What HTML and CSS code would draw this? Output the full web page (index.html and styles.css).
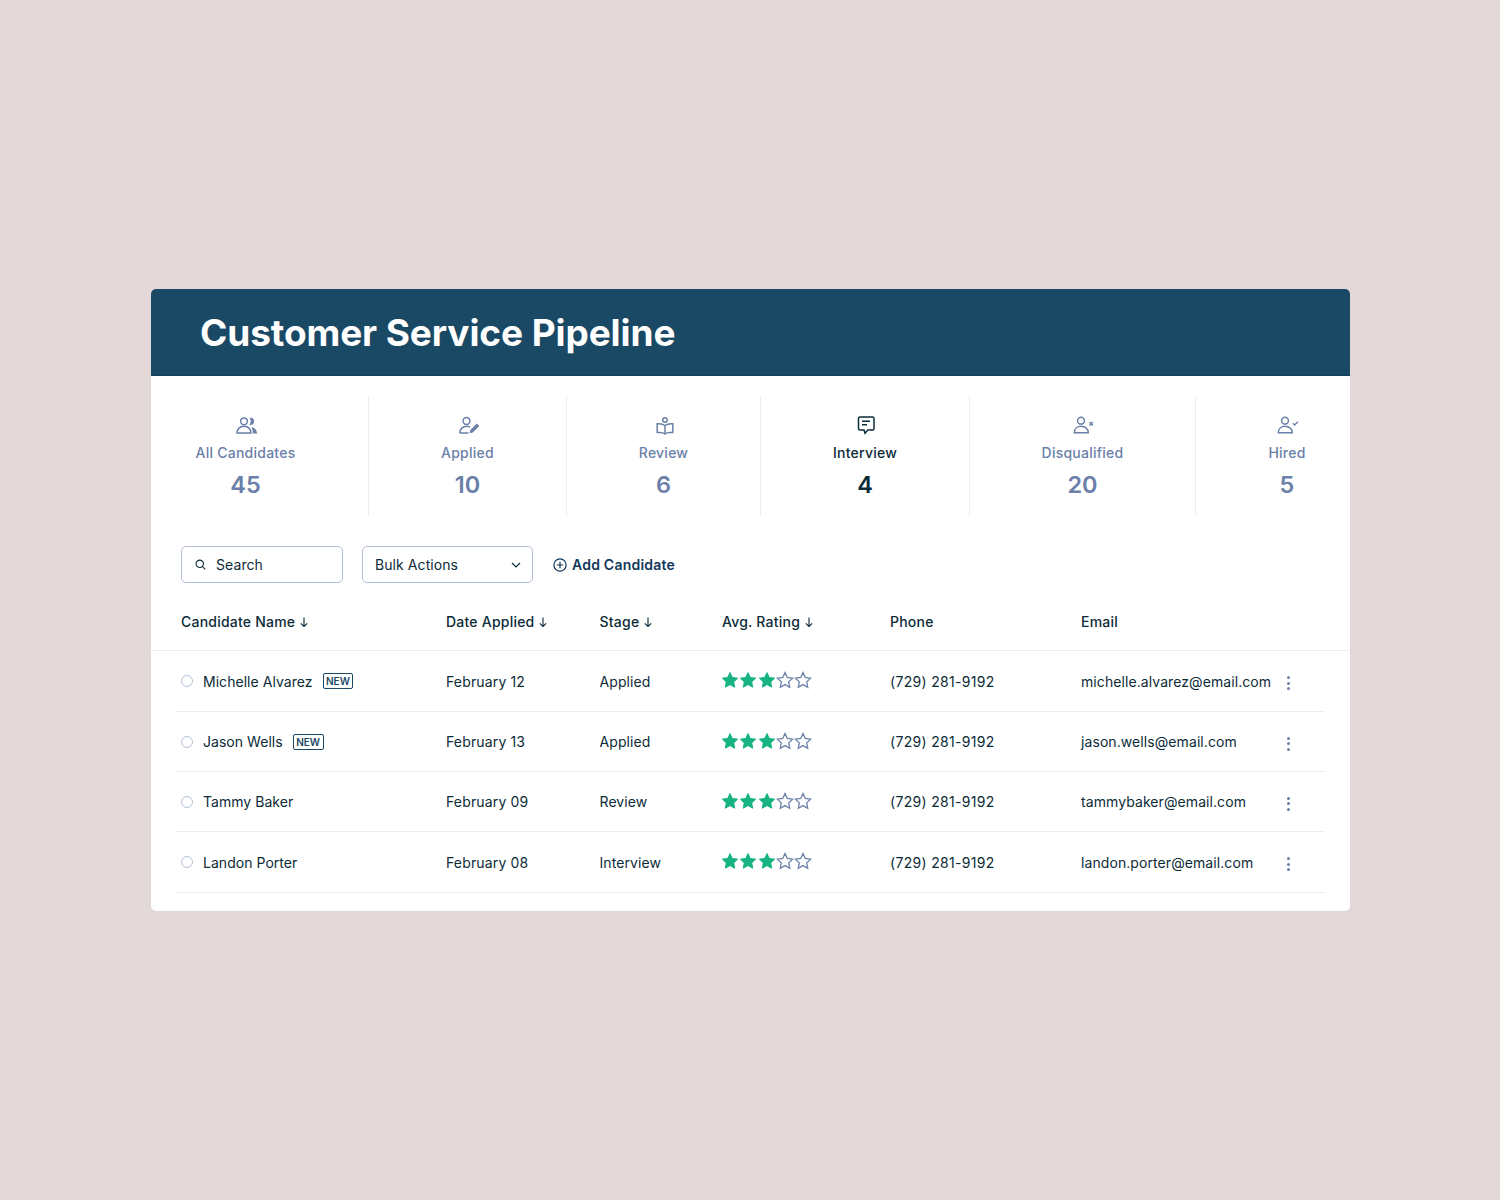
FILE: index.html
```html
<!DOCTYPE html>
<html lang="en">
<head>
<meta charset="utf-8">
<title>Customer Service Pipeline</title>
<link rel="stylesheet" href="styles.css">
</head>
<body>
<svg class="defs" width="0" height="0" aria-hidden="true">
  <defs>
    <path id="star" d="M9 1.6l2.300 4.900 5.300.7-3.900 3.700 1 5.300L9 13.600l-4.700 2.600 1-5.300-3.900-3.700 5.300-.7z"/>
  </defs>
</svg>
<main class="card">
  <header class="banner"><h1>Customer Service Pipeline</h1></header>

  <section class="stats">
    <div class="stat stat-first">
      <svg class="stat-icon" viewBox="0 0 22 22"><circle cx="8" cy="8.300" r="3.400"/><path d="M1 20c0-4 3-6.800 7-6.800s7 2.800 7 6.800z"/><path class="solid" d="M13.500 4.700h1a3.600 3.600 0 0 1 0 7.200h-1c.8-1 1.200-2.300 1.200-3.600s-.4-2.600-1.200-3.600zM15.500 14c3 .6 5.500 2.800 5.500 6.400h-4.200c0-2.400-.3-4.600-1.300-6.400z"/></svg>
      <span class="stat-label">All Candidates</span>
      <span class="stat-num">45</span>
    </div>
    <div class="stat stat-2">
      <svg class="stat-icon" viewBox="0 0 22 22"><circle cx="8.500" cy="8" r="3.400"/><path d="M1.800 20c0-4 3-6.800 6.700-6.800 1.300 0 2.400.3 3.400.8M1.800 20h8.700"/><path class="solid" d="M12.300 17l6.500-6.500 2.500 2.500-6.500 6.500-3.200.7z"/></svg>
      <span class="stat-label">Applied</span>
      <span class="stat-num">10</span>
    </div>
    <div class="stat stat-3">
      <svg class="stat-icon" viewBox="0 0 22 22"><circle cx="11" cy="7" r="2.200"/><path d="M11 12.500c-1.700-1.200-3.700-1.700-6-1.700H3.200v8.700H6c2 0 3.600.5 5 1.500 1.400-1 3-1.500 5-1.500h2.800v-8.700H17c-2.300 0-4.300.5-6 1.700zM11 12.500V20"/></svg>
      <span class="stat-label">Review</span>
      <span class="stat-num">6</span>
    </div>
    <div class="stat stat-4 stat-active">
      <svg class="stat-icon" viewBox="0 0 22 22"><path d="M5 4h12.500A1.500 1.500 0 0 1 19 5.500v10a1.500 1.500 0 0 1-1.500 1.500h-4.700L10 20.300 9 17H5a1.500 1.500 0 0 1-1.500-1.500v-10A1.500 1.500 0 0 1 5 4z"/><path d="M7 8.300h8M7 11.800h5"/></svg>
      <span class="stat-label">Interview</span>
      <span class="stat-num">4</span>
    </div>
    <div class="stat stat-5">
      <svg class="stat-icon" viewBox="0 0 22 22"><circle cx="8" cy="7.700" r="3.400"/><path d="M1.300 19.700c0-4 3-6.500 6.700-6.500s7.300 2.500 7.300 6.500z"/><path class="thin" d="M16.500 9l3.400 3.600M19.900 9l-3.400 3.600"/></svg>
      <span class="stat-label">Disqualified</span>
      <span class="stat-num">20</span>
    </div>
    <div class="stat stat-last">
      <svg class="stat-icon" viewBox="0 0 22 22"><circle cx="8" cy="7.700" r="3.400"/><path d="M1.300 19.700c0-4 3-6.500 6.700-6.500s7.300 2.500 7.300 6.500z"/><path class="thin" d="M15.800 10.300l1.800 1.700 3.400-3.300"/></svg>
      <span class="stat-label">Hired</span>
      <span class="stat-num">5</span>
    </div>
  </section>

  <section class="toolbar">
    <div class="field search">
      <svg class="search-icon" viewBox="0 0 12 12"><circle cx="5.200" cy="5.200" r="4"/><path d="M8.200 8.200l3 3"/></svg>
      <span>Search</span>
    </div>
    <div class="field bulk">
      <span>Bulk Actions</span>
      <svg class="chev" viewBox="0 0 12 12"><path d="M2 4l4 4 4-4"/></svg>
    </div>
    <div class="add">
      <svg class="add-icon" viewBox="0 0 16 16"><circle cx="8" cy="8" r="7"/><path d="M8 4.300v7.400M4.300 8h7.400"/></svg>
      <span>Add Candidate</span>
    </div>
  </section>

  <section class="table">
    <div class="row head">
      <span class="th">Candidate Name <svg class="sort" viewBox="0 0 10 12"><path d="M5 1.500v9M1.800 7.300L5 10.500l3.200-3.200"/></svg></span>
      <span class="th">Date Applied <svg class="sort" viewBox="0 0 10 12"><path d="M5 1.500v9M1.800 7.300L5 10.500l3.200-3.200"/></svg></span>
      <span class="th">Stage <svg class="sort" viewBox="0 0 10 12"><path d="M5 1.500v9M1.800 7.300L5 10.500l3.200-3.200"/></svg></span>
      <span class="th">Avg. Rating <svg class="sort" viewBox="0 0 10 12"><path d="M5 1.500v9M1.800 7.300L5 10.500l3.200-3.200"/></svg></span>
      <span class="th">Phone</span>
      <span class="th">Email</span>
    </div>

    <div class="row item">
      <span class="name"><i class="radio"></i>Michelle Alvarez<b class="badge">NEW</b></span>
      <span class="date">February 12</span>
      <span>Applied</span>
      <span class="stars"><svg viewBox="0 0 18 18" class="on"><use href="#star"/></svg><svg viewBox="0 0 18 18" class="on"><use href="#star"/></svg><svg viewBox="0 0 18 18" class="on"><use href="#star"/></svg><svg viewBox="0 0 18 18" class="off"><use href="#star"/></svg><svg viewBox="0 0 18 18" class="off"><use href="#star"/></svg></span>
      <span class="phone">(729) 281-9192</span>
      <span>michelle.alvarez@email.com</span>
      <span class="more"><i></i><i></i><i></i></span>
    </div>
    <div class="row item">
      <span class="name"><i class="radio"></i>Jason Wells<b class="badge">NEW</b></span>
      <span class="date">February 13</span>
      <span>Applied</span>
      <span class="stars"><svg viewBox="0 0 18 18" class="on"><use href="#star"/></svg><svg viewBox="0 0 18 18" class="on"><use href="#star"/></svg><svg viewBox="0 0 18 18" class="on"><use href="#star"/></svg><svg viewBox="0 0 18 18" class="off"><use href="#star"/></svg><svg viewBox="0 0 18 18" class="off"><use href="#star"/></svg></span>
      <span class="phone">(729) 281-9192</span>
      <span>jason.wells@email.com</span>
      <span class="more"><i></i><i></i><i></i></span>
    </div>
    <div class="row item">
      <span class="name"><i class="radio"></i>Tammy Baker</span>
      <span class="date">February 09</span>
      <span>Review</span>
      <span class="stars"><svg viewBox="0 0 18 18" class="on"><use href="#star"/></svg><svg viewBox="0 0 18 18" class="on"><use href="#star"/></svg><svg viewBox="0 0 18 18" class="on"><use href="#star"/></svg><svg viewBox="0 0 18 18" class="off"><use href="#star"/></svg><svg viewBox="0 0 18 18" class="off"><use href="#star"/></svg></span>
      <span class="phone">(729) 281-9192</span>
      <span>tammybaker@email.com</span>
      <span class="more"><i></i><i></i><i></i></span>
    </div>
    <div class="row item">
      <span class="name"><i class="radio"></i>Landon Porter</span>
      <span class="date">February 08</span>
      <span>Interview</span>
      <span class="stars"><svg viewBox="0 0 18 18" class="on"><use href="#star"/></svg><svg viewBox="0 0 18 18" class="on"><use href="#star"/></svg><svg viewBox="0 0 18 18" class="on"><use href="#star"/></svg><svg viewBox="0 0 18 18" class="off"><use href="#star"/></svg><svg viewBox="0 0 18 18" class="off"><use href="#star"/></svg></span>
      <span class="phone">(729) 281-9192</span>
      <span>landon.porter@email.com</span>
      <span class="more"><i></i><i></i><i></i></span>
    </div>
  </section>
</main>
</body>
</html>
```

FILE: styles.css
```css
* { box-sizing: border-box; }
html, body { height: 100%; }
body {
  margin: 0;
  min-height: 1200px;
  background: #e3d8d8;
  font-family: Inter, "Liberation Sans", sans-serif;
  font-size: 14px;
  letter-spacing: 0.08px;
  color: #0c2b38;
  display: flex;
  flex-direction: column;
  align-items: center;
  padding-top: 289px;
}
.defs { position: absolute; }
.card {
  width: 1199px;
  height: 622px;
  margin-left: 1px;
  background: #fff;
  border-radius: 5px;
  overflow: hidden;
}
.banner {
  height: 87px;
  background: #1a4966;
  border-bottom: 1px solid #15405b;
  padding: 0 0 0 49px;
  display: flex;
  align-items: center;
}
.banner h1 {
  margin: 0;
  font-size: 37px;
  font-weight: 700;
  color: #fff;
  letter-spacing: -0.1px;
}
.stats {
  display: grid;
  grid-template-columns: 218px 198px 194px 209px 226px 154px;
  margin-top: 20px;
  height: 120px;
}
.stat {
  display: flex;
  flex-direction: column;
  align-items: center;
  color: #6b80a8;
  border-right: 1px solid #ecedf3;
  padding-top: 17px;
}
.stat-first { padding-right: 28px; }
.stat-last { border-right: 0; padding-left: 28px; }
.stat-active { color: #0c2b38; }
.stat-icon {
  width: 22px;
  height: 22px;
  margin-left: 2px;
  fill: none;
  stroke: currentColor;
  stroke-width: 1.500;
}
.stat-first .stat-icon { margin-left: 3px; }
.stat-icon .solid { fill: currentColor; stroke: none; }
.stat-icon .thin { stroke-width: 1.400; }
.stat-label {
  margin-top: 9px;
  font-size: 14px;
  line-height: 18px;
  font-weight: 500;
  letter-spacing: 0.24px;
}
.stat-num {
  margin-top: 8px;
  font-size: 23.500px;
  line-height: 30px;
  font-weight: 600;
  letter-spacing: 0;
}
.toolbar {
  display: flex;
  align-items: center;
  margin-top: 30px;
  padding-left: 30px;
  height: 37px;
}
.field {
  height: 37px;
  border: 1px solid #b4c0d6;
  border-radius: 5px;
  display: flex;
  align-items: center;
}
.search { width: 162px; padding-left: 13px; gap: 10px; }
.search-icon {
  width: 11px;
  height: 11px;
  fill: none;
  stroke: #0c2b38;
  stroke-width: 1.200;
}
.bulk {
  width: 171px;
  margin-left: 19px;
  padding: 0 10px 0 12px;
  justify-content: space-between;
}
.chev {
  width: 12px;
  height: 12px;
  fill: none;
  stroke: #0c2b38;
  stroke-width: 1.200;
}
.add {
  margin-left: 20px;
  display: flex;
  align-items: center;
  gap: 5px;
  font-weight: 600;
  letter-spacing: 0.22px;
  color: #12385a;
}
.add-icon {
  width: 14px;
  height: 14px;
  fill: none;
  stroke: currentColor;
  stroke-width: 1.400;
}
.row {
  display: grid;
  grid-template-columns: 265px 153.500px 122.500px 168px 191px 197px 20px;
  align-items: center;
}
.head {
  height: 68px;
  margin-bottom: 0.600px;
  padding: 10px 25px 0 30px;
  border-bottom: 1px solid #ecedf3;
  font-weight: 450;
}
.th { display: flex; align-items: center; gap: 4px; letter-spacing: 0.22px; }
.sort {
  width: 10px;
  height: 12px;
  fill: none;
  stroke: #0c2b38;
  stroke-width: 1.100;
}
.item {
  height: 60.300px;
  margin: 0 25px;
  padding-left: 5px;
  border-bottom: 1px solid #ecedf3;
}
.phone { letter-spacing: 0.32px; }
.date { letter-spacing: 0.15px; }
.name { display: flex; align-items: center; letter-spacing: 0.04px; }
.radio {
  width: 12px;
  height: 12px;
  border: 1px solid #b4c0d6;
  border-radius: 50%;
  margin-right: 10px;
}
.badge {
  margin-left: 10px;
  height: 16px;
  padding: 0 2.500px;
  border: 1px solid #1a4966;
  border-radius: 2px;
  font-size: 10px;
  line-height: 14px;
  font-weight: 600;
  letter-spacing: 0;
  color: #1a4966;
}
.stars { display: flex; gap: 0.250px; margin-left: -1px; margin-top: -2px; }
.stars svg { width: 18px; height: 18px; }
.stars .on { fill: #17b382; stroke: #17b382; stroke-width: 1; }
.stars .off { fill: none; stroke: #6b80a8; stroke-width: 1.300; }
.more {
  display: flex;
  flex-direction: column;
  align-items: center;
  gap: 2.500px;
  margin-top: 4px;
}
.more i {
  width: 3px;
  height: 3px;
  border-radius: 50%;
  background: #6b80a8;
}
```
